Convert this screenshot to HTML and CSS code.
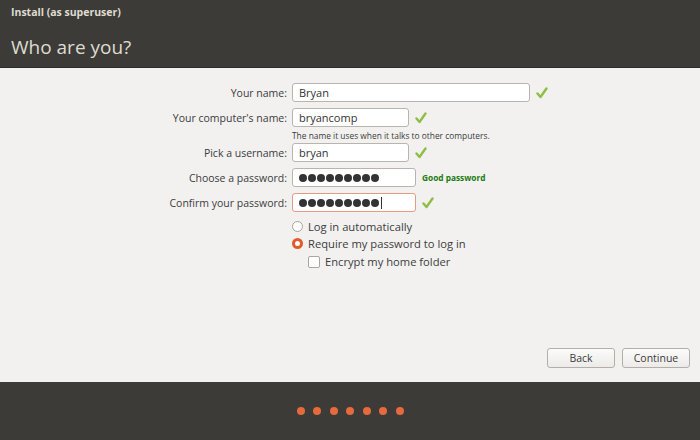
FILE: index.html
```html
<!DOCTYPE html>
<html lang="en">

<head>
    <meta charset="UTF-8">
    <meta name="viewport" content="width=device-width, initial-scale=1.0">
    <title>Install (as superuser)</title>
    <link rel="stylesheet" href="styles.css">
</head>

<body>
    <div class="window">
        <div class="header">
            <p class="wintitle">Install (as superuser)</p>
            <h1>Who are you?</h1>
        </div>

        <div class="main">
            <div class="form">
                <div class="row">
                    <label>Your name:</label>
                    <div class="entry wide">Bryan</div>
                    <svg class="tick" viewBox="0 0 12 12"><path d="M1.5 6.5 L4.5 10 L10.5 1.5" /></svg>
                </div>
                <div class="row">
                    <label>Your computer's name:</label>
                    <div class="entry">bryancomp</div>
                    <svg class="tick" viewBox="0 0 12 12"><path d="M1.5 6.5 L4.5 10 L10.5 1.5" /></svg>
                </div>
                <p class="hint">The name it uses when it talks to other computers.</p>
                <div class="row">
                    <label>Pick a username:</label>
                    <div class="entry">bryan</div>
                    <svg class="tick" viewBox="0 0 12 12"><path d="M1.5 6.5 L4.5 10 L10.5 1.5" /></svg>
                </div>
                <div class="row">
                    <label>Choose a password:</label>
                    <div class="entry pw">
                        <i></i><i></i><i></i><i></i><i></i><i></i><i></i><i></i><i></i>
                    </div>
                    <span class="strength">Good password</span>
                </div>
                <div class="row">
                    <label>Confirm your password:</label>
                    <div class="entry pw focused">
                        <i></i><i></i><i></i><i></i><i></i><i></i><i></i><i></i><i></i><span class="caret"></span>
                    </div>
                    <svg class="tick" viewBox="0 0 12 12"><path d="M1.5 6.5 L4.5 10 L10.5 1.5" /></svg>
                </div>

                <div class="options">
                    <div class="opt"><span class="radio"></span>Log in automatically</div>
                    <div class="opt"><span class="radio on"></span>Require my password to log in</div>
                    <div class="opt sub"><span class="check"></span>Encrypt my home folder</div>
                </div>
            </div>

            <div class="buttons">
                <button>Back</button>
                <button>Continue</button>
            </div>
        </div>

        <div class="footer">
            <div class="dots">
                <i></i><i></i><i></i><i></i><i></i><i></i><i></i>
            </div>
        </div>
    </div>
</body>

</html>
```

FILE: styles.css
```css
    body {
        margin: 0;
        font-family: "Open Sans", "Liberation Sans", sans-serif;
        font-size: 10.5px;
        color: #3c3c3c;
    }

    .window {
        width: 700px;
        height: 440px;
        display: flex;
        flex-direction: column;
        background: #f2f1f0;
    }

    /* 顶部深色标题栏 */
    .header {
        height: 68px;
        background: #3c3b37;
        border-bottom: 1px solid #2d2c29;
        box-sizing: border-box;
        padding: 5px 11px 0;
    }

    .wintitle {
        margin: 0;
        color: #dfdbd2;
        font-weight: bold;
        font-size: 10.5px;
    }

    .header h1 {
        margin: 15px 0 0;
        color: #dfdbd2;
        font-weight: normal;
        font-size: 19px;
    }

    .main {
        flex: 1;
        display: flex;
        flex-direction: column;
        padding: 15px 10px 14px 0;
    }

    .form {
        flex: 1;
    }

    .row {
        display: flex;
        align-items: center;
        height: 19px;
        margin-bottom: 6px;
    }

    .row label {
        width: 292px;
        text-align: right;
        padding-right: 5px;
        box-sizing: border-box;
        color: #3c3c3c;
    }

    .entry {
        width: 117px;
        height: 19px;
        box-sizing: border-box;
        border: 1px solid #b9b5ae;
        border-radius: 3px;
        background: #fff;
        padding-left: 6px;
        display: flex;
        align-items: center;
        color: #333;
        font-size: 11px;
    }

    .entry.wide {
        width: 238px;
    }

    .entry.pw {
        width: 124px;
        gap: 1px;
    }

    .entry.pw i {
        width: 8px;
        height: 8px;
        border-radius: 50%;
        background: #333;
    }

    .entry.focused {
        border-color: #e69a80;
    }

    .caret {
        width: 1px;
        height: 12px;
        background: #333;
        margin-left: 1px;
    }

    .tick {
        width: 12px;
        height: 12px;
        margin-left: 6px;
    }

    .tick path {
        fill: none;
        stroke: #8fbd45;
        stroke-width: 2.4;
        stroke-linecap: round;
        stroke-linejoin: round;
    }

    .strength {
        margin-left: 6px;
        color: #1c7a12;
        font-weight: bold;
        font-size: 8.3px;
    }

    .hint {
        margin: -3px 0 2px 292px;
        font-size: 8.4px;
        color: #3c3c3c;
    }

    .options {
        margin: 5px 0 0 292px;
    }

    .opt {
        display: flex;
        align-items: center;
        height: 17px;
        gap: 5px;
        font-size: 11.2px;
    }

    .opt.sub {
        margin-left: 16px;
        margin-top: 1px;
    }

    .radio {
        width: 11px;
        height: 11px;
        box-sizing: border-box;
        border: 1px solid #a8a49e;
        border-radius: 50%;
        background: #fff;
    }

    .radio.on {
        border: 3px solid #e05a2b;
        background: #fff;
    }

    .check {
        width: 10px;
        height: 10px;
        border: 1px solid #a8a49e;
        border-radius: 2px;
        background: #fff;
    }

    .buttons {
        display: flex;
        justify-content: flex-end;
        gap: 7px;
    }

    .buttons button {
        width: 68px;
        height: 20px;
        font-family: inherit;
        font-size: 10.5px;
        color: #3c3c3c;
        border: 1px solid #b3afa8;
        border-radius: 3px;
        background: linear-gradient(#fbfbfa, #ecebe9);
        padding: 0;
    }

    /* 底部进度点 */
    .footer {
        height: 58px;
        background: #3c3b37;
        display: flex;
        align-items: center;
        justify-content: center;
    }

    .dots {
        display: flex;
        gap: 8.5px;
    }

    .dots i {
        width: 8px;
        height: 8px;
        border-radius: 50%;
        background: #e66a3d;
    }
```
